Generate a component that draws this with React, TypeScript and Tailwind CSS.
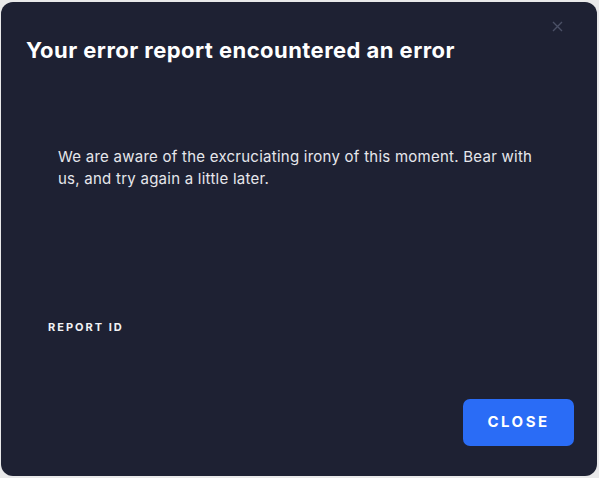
export default function App() {
  return (
    <div className="h-[478px] w-[599px] bg-[#e9e9ea] pl-px pt-[2px] pr-[2px] pb-[2px] font-['Inter',sans-serif]">
      <div className="relative flex h-full flex-col rounded-[12px] bg-[#1e2133]">
        <button className="absolute right-[34px] top-[19px] text-[#4b5066]">
          <svg width="11" height="11" viewBox="0 0 11 11" fill="none" stroke="currentColor" strokeWidth="1.4">
            <path d="M1 1L10 10M10 1L1 10" />
          </svg>
        </button>
        <h1 className="ml-[25px] mt-[34px] text-[22px] font-bold leading-[28px] tracking-[0.45px] text-white">
          Your error report encountered an error
        </h1>
        <p className="ml-[57px] mr-[52px] mt-[82px] text-[15px] leading-[22px] tracking-[0.25px] text-[#e6e7ec]">
          We are aware of the excruciating irony of this moment. Bear with us, and try again a little later.
        </p>
        <div className="ml-[47px] mt-[129px] text-[11px] font-bold tracking-[2px] text-[#f1f2f5]">
          REPORT ID
        </div>
        <div className="mt-auto flex justify-end pb-[30px] pr-[23px]">
          <button className="h-[47px] w-[111px] rounded-[7px] bg-[#2a6cf6] text-[15px] font-bold tracking-[2.5px] text-white">
            CLOSE
          </button>
        </div>
      </div>
    </div>
  );
}
